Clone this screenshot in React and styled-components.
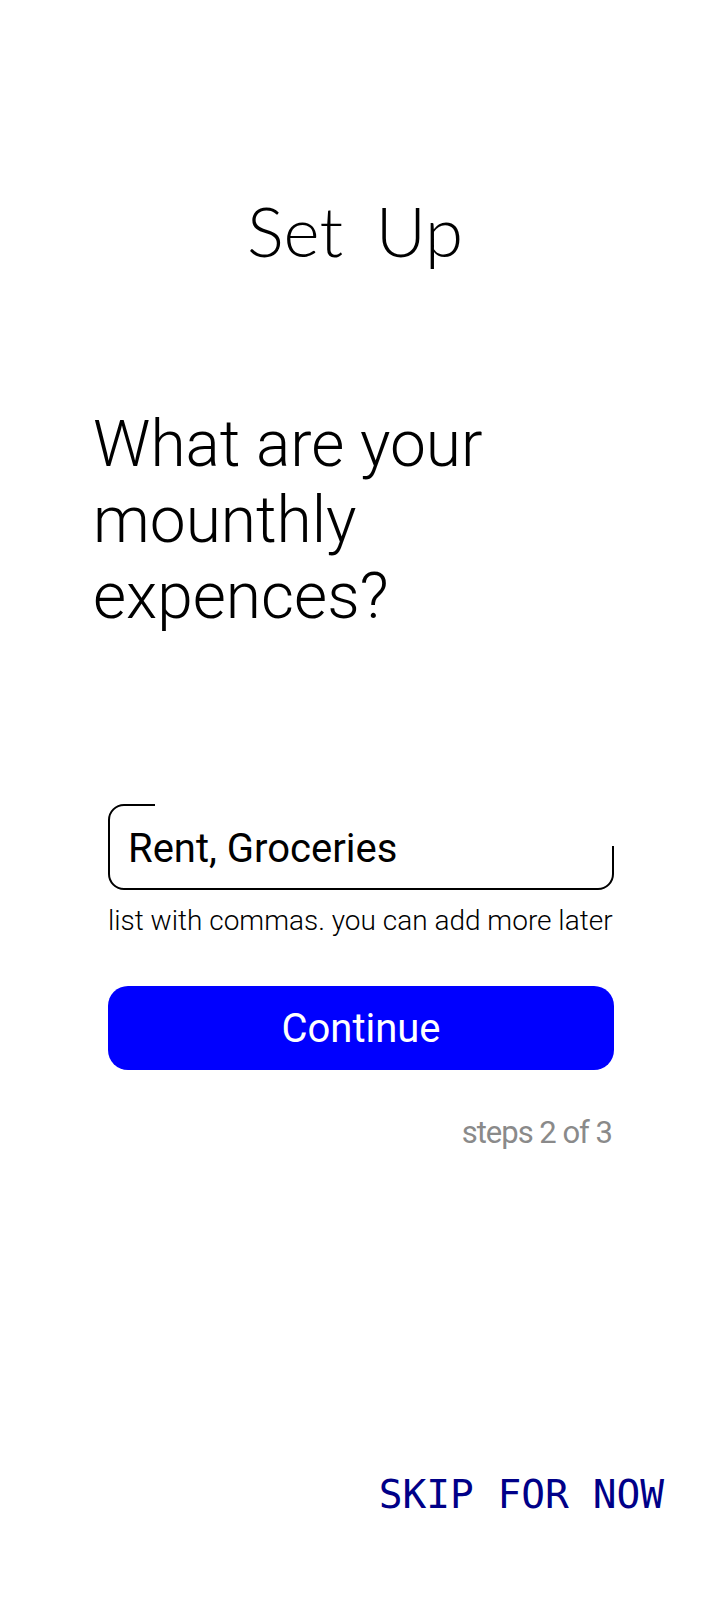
import React from 'react';
import styled, { createGlobalStyle } from 'styled-components';

const GlobalStyle = createGlobalStyle`
  html, body {
    margin: 0;
    padding: 0;
    background: #ffffff;
  }
  * {
    box-sizing: border-box;
  }
`;

const Screen = styled.div`
  width: 720px;
  min-height: 1600px;
  display: flex;
  flex-direction: column;
  background: #ffffff;
  font-family: Roboto, "Liberation Sans", sans-serif;
  color: #000000;
`;

const Title = styled.h1`
  margin: 196px 0 0;
  text-align: center;
  font-family: Lato, "DejaVu Sans", sans-serif;
  font-weight: 300;
  font-size: 69px;
  line-height: 69px;
  word-spacing: 14px;
  padding-right: 10px;
`;

const Question = styled.h2`
  margin: 142px 0 0;
  padding-left: 93px;
  font-weight: 300;
  font-size: 64px;
  line-height: 76px;
`;

const Form = styled.div`
  margin: 169px 0 0 108px;
  width: 506px;
  display: flex;
  flex-direction: column;
`;

const Field = styled.div`
  position: relative;
  height: 86px;
  border: 2px solid #000000;
  border-radius: 16px;
  padding: 0 18px;
  display: flex;
  align-items: center;
  font-size: 40px;

  /* notch in the outline, top right */
  &::after {
    content: '';
    position: absolute;
    top: -3px;
    left: 45px;
    right: -3px;
    height: 43px;
    background: #ffffff;
  }
`;

const FieldText = styled.span`
  position: relative;
  z-index: 1;
  padding-top: 2px;
`;

const Hint = styled.p`
  margin: 14px 0 0;
  font-weight: 300;
  font-size: 28px;
  line-height: 33px;
  white-space: nowrap;
`;

const Button = styled.button`
  margin-top: 49px;
  height: 84px;
  border: none;
  border-radius: 20px;
  background: #0000ff;
  color: #ffffff;
  font-family: Roboto, "Liberation Sans", sans-serif;
  font-size: 40px;
  padding: 0;
  cursor: pointer;
`;

const Steps = styled.div`
  margin-top: 45px;
  text-align: right;
  padding-right: 2px;
  color: #8a8a8a;
  font-size: 31px;
  line-height: 36px;
  letter-spacing: -1px;
`;

const Skip = styled.div`
  margin-top: 320px;
  align-self: flex-end;
  padding-right: 56px;
  color: #000088;
  font-family: "DejaVu Sans Mono", "Liberation Mono", monospace;
  font-size: 39.5px;
  line-height: 46px;
`;

const App = () => {
  return (
    <Screen>
      <GlobalStyle />
      <Title>Set Up</Title>
      <Question>
        What are your
        <br />
        mounthly
        <br />
        expences?
      </Question>
      <Form>
        <Field>
          <FieldText>Rent, Groceries</FieldText>
        </Field>
        <Hint>list with commas. you can add more later</Hint>
        <Button>Continue</Button>
        <Steps>steps 2 of 3</Steps>
      </Form>
      <Skip>SKIP FOR NOW</Skip>
    </Screen>
  );
};

export default App;
